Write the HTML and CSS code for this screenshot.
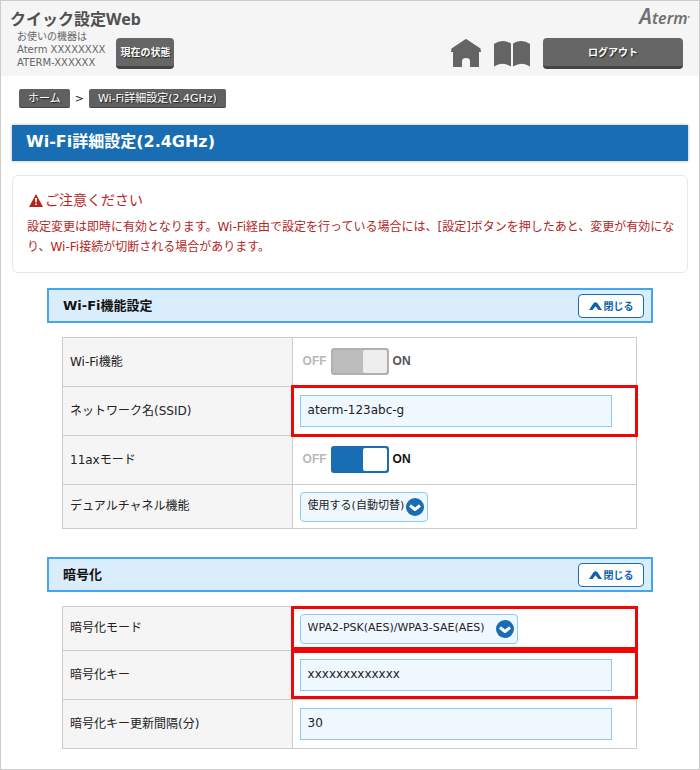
FILE: index.html
```html
<!DOCTYPE html>
<html lang="ja">
<head>
<meta charset="utf-8">
<meta name="viewport" content="width=device-width, initial-scale=1">
<title>クイック設定Web</title>
<link rel="stylesheet" href="styles.css">
</head>
<body>
<div class="page">
  <header class="header">
    <div class="brand">
      <h1 class="title">クイック設定Web</h1>
      <div class="device">
        <p class="device-name">お使いの機器は<br>Aterm XXXXXXXX<br>ATERM-XXXXXX</p>
        <button type="button" class="btn btn-status">現在の状態</button>
      </div>
    </div>
    <div class="tools">
      <div class="logo"><span class="logo-cap">A</span>term<span class="logo-mark">●</span></div>
      <div class="tool-row">
        <a href="#" aria-label="ホーム"><svg class="icon-home" viewBox="0 0 30 29"><path d="M14 .5Q15-.3 16 .5L29.500 9.500 30 13H28V28H19V22Q19 19 15 19T11 22V28H2V13H0L.5 9.500Z"/></svg></a>
        <a href="#" aria-label="マニュアル"><svg class="icon-book" viewBox="0 0 36 26"><path d="M0 3Q8-2.500 17 2.500V25.500Q8 20 0 25.500ZM19 2.500Q28-2.500 36 3V25.500Q28 20 19 25.500Z"/></svg></a>
        <button type="button" class="btn btn-logout">ログアウト</button>
      </div>
    </div>
  </header>

  <main class="main">
    <nav class="crumbs">
      <a href="#" class="crumb">ホーム</a>
      <span class="crumb-sep">&gt;</span>
      <a href="#" class="crumb">Wi-Fi詳細設定(2.4GHz)</a>
    </nav>

    <h2 class="page-title">Wi-Fi詳細設定(2.4GHz)</h2>

    <section class="notice">
      <h3 class="notice-title"><svg class="icon-warn" viewBox="0 0 14 13"><path class="warn-shape" d="M7 0 14 13H0Z"/><path class="warn-mark" d="M6 4h2l-.4 4.500H6.400ZM6.200 9.500h1.600V11H6.200Z"/></svg>ご注意ください</h3>
      <p class="notice-text">設定変更は即時に有効となります。Wi-Fi経由で設定を行っている場合には、[設定]ボタンを押したあと、変更が有効になり、Wi-Fi接続が切断される場合があります。</p>
    </section>

    <section class="group">
      <div class="group-head">
        <h3 class="group-title">Wi-Fi機能設定</h3>
        <button type="button" class="btn-close"><svg class="icon-up" viewBox="0 0 13 8"><path d="M0 8 4.500 1.200Q6.500-.8 8.500 1.200L13 8H9.500L6.500 4.200 3.500 8Z"/></svg>閉じる</button>
      </div>
      <table class="form">
        <tr>
          <th scope="row"><label for="wifi">Wi-Fi機能</label></th>
          <td><div class="switch is-disabled"><span class="off">OFF</span><input type="checkbox" id="wifi" class="toggle" checked disabled><span class="on">ON</span></div></td>
        </tr>
        <tr>
          <th scope="row"><label for="ssid">ネットワーク名(SSID)</label></th>
          <td class="marked"><input type="text" id="ssid" class="text" value="aterm-123abc-g"></td>
        </tr>
        <tr>
          <th scope="row"><label for="ax">11axモード</label></th>
          <td><div class="switch"><span class="off">OFF</span><input type="checkbox" id="ax" class="toggle" checked><span class="on">ON</span></div></td>
        </tr>
        <tr class="short">
          <th scope="row"><label for="dual">デュアルチャネル機能</label></th>
          <td><div class="select"><select id="dual"><option>使用する(自動切替)</option></select><svg class="icon-down" viewBox="0 0 18 18"><circle cx="9" cy="9" r="9"/><path d="M4 7.500 9 11.500 14 7.500"/></svg></div></td>
        </tr>
      </table>
    </section>

    <section class="group">
      <div class="group-head">
        <h3 class="group-title">暗号化</h3>
        <button type="button" class="btn-close"><svg class="icon-up" viewBox="0 0 13 8"><path d="M0 8 4.500 1.200Q6.500-.8 8.500 1.200L13 8H9.500L6.500 4.200 3.500 8Z"/></svg>閉じる</button>
      </div>
      <table class="form">
        <tr class="short">
          <th scope="row"><label for="mode">暗号化モード</label></th>
          <td class="marked marked-inner"><div class="select select-wide"><select id="mode"><option>WPA2-PSK(AES)/WPA3-SAE(AES)</option></select><svg class="icon-down" viewBox="0 0 18 18"><circle cx="9" cy="9" r="9"/><path d="M4 7.500 9 11.500 14 7.500"/></svg></div></td>
        </tr>
        <tr>
          <th scope="row"><label for="key">暗号化キー</label></th>
          <td class="marked marked-inner"><input type="text" id="key" class="text" value="xxxxxxxxxxxxx"></td>
        </tr>
        <tr>
          <th scope="row"><label for="interval">暗号化キー更新間隔(分)</label></th>
          <td><input type="text" id="interval" class="text" value="30"></td>
        </tr>
      </table>
    </section>
  </main>
</div>
</body>
</html>
```
FILE: styles.css
```css
* { box-sizing: border-box; }

body, h1, h2, h3, p { margin: 0; }

body {
  font-family: "DejaVu Sans", "Noto Sans CJK JP", sans-serif;
  font-size: 12px;
  color: #222;
  background: #fff;
}

button, input, select { font-family: inherit; color: inherit; }
svg { display: block; }

.page {
  min-height: 100vh;
  border: 1px solid #ccc;
}

.header {
  display: flex;
  justify-content: space-between;
  padding: 7px 16px 7px 9px;
  background: #f5f5f5;
}

.title {
  font-family: "Noto Sans", "Noto Sans CJK JP", sans-serif;
  font-size: 16px;
  line-height: 22px;
  font-weight: 700;
  color: #505050;
}

.device {
  display: flex;
  align-items: flex-end;
  gap: 11px;
  padding-left: 7px;
}

.device-name {
  font-size: 10px;
  line-height: 13px;
  color: #666;
}

.btn {
  height: 31px;
  padding: 0 4px 2px;
  border: 0;
  border-bottom: 3px solid #444;
  border-radius: 4px;
  background: #666;
  color: #fff;
  font-size: 10px;
  font-weight: 700;
  text-shadow: 1px 1px 1px #222;
  white-space: nowrap;
}

.btn-status { min-width: 58px; }
.btn-logout { width: 140px; }

.tools {
  display: flex;
  flex-direction: column;
  align-items: flex-end;
  justify-content: space-between;
}

.logo {
  display: flex;
  align-items: baseline;
  margin-right: -7px;
  font: italic 600 16px/16px "Noto Sans", sans-serif;
  color: #707070;
}

.logo-cap { font-size: 21px; }
.logo-mark { align-self: center; font-size: 4px; line-height: 4px; }

.tool-row {
  display: flex;
  align-items: center;
  gap: 13px;
}

.icon-home, .icon-book { fill: #646464; }
.icon-home { width: 30px; height: 29px; }
.icon-book { width: 36px; height: 26px; }

.main { padding: 13px 11px 19px; }

.crumbs {
  display: flex;
  align-items: center;
  gap: 5px;
  padding-left: 7px;
  margin-bottom: 17px;
}

.crumb {
  padding: 1px 9px 0;
  border-radius: 2px;
  border-bottom: 1px solid #444;
  background: #606060;
  color: #fff;
  font-size: 11px;
  line-height: 17px;
  text-decoration: none;
  text-shadow: 1px 1px 1px #222;
}

.crumb-sep { font-size: 11px; }

.page-title {
  padding: 0 14px 2px;
  background: #186db3;
  box-shadow: 0 0 3px #b8b0aa;
  color: #fff;
  font-size: 16px;
  line-height: 34px;
}

.notice {
  margin: 14px 0 15px;
  padding: 14px 12px 15px 14px;
  border: 1px solid #e8e8e8;
  border-radius: 6px;
  color: #b3261e;
}

.notice-title {
  display: flex;
  align-items: center;
  gap: 2px;
  margin-bottom: 7px;
  padding-left: 2px;
  font-size: 14px;
  line-height: 20px;
  font-weight: 400;
}

.icon-warn { width: 14px; height: 13px; }
.warn-shape { fill: #b3261e; }
.warn-mark { fill: #fff; }

.notice-text { line-height: 20px; }

.group { margin: 0 35px 28px; }
.group:last-child { margin-bottom: 0; }

.group-head {
  display: flex;
  align-items: center;
  justify-content: space-between;
  height: 35px;
  padding: 0 7px 0 14px;
  border: 2px solid #43a6f0;
  background: #daedfd;
}

.group-title { padding-bottom: 2px; font-size: 13px; color: #111; }

.btn-close {
  display: flex;
  align-items: center;
  justify-content: center;
  gap: 2px;
  width: 66px;
  height: 24px;
  padding: 0;
  border: 1px solid #186db3;
  border-radius: 4px;
  background: #fff;
  color: #0f62ac;
  font-size: 10px;
  font-weight: 700;
}

.icon-up { width: 13px; height: 8px; fill: #0f62ac; }

.form {
  width: calc(100% - 31px);
  margin: 14px 15px 0;
  border-collapse: collapse;
  table-layout: fixed;
}

.form th, .form td {
  height: 49px;
  padding: 0 7px;
  border: 1px solid #ccc;
}

.form .short th, .form .short td { height: 44px; }

.form th {
  width: 40%;
  padding-bottom: 4px;
  background: #f5f5f5;
  font-weight: 400;
  text-align: left;
}

.marked { position: relative; }

.marked::after {
  content: "";
  position: absolute;
  inset: -2px;
  border: 3px solid #f00606;
  pointer-events: none;
}

.marked-inner::after { inset: -1px -2px 0; }

.text {
  display: block;
  width: 312px;
  max-width: 100%;
  height: 32px;
  padding: 0 7px 2px;
  border: 1px solid #8cc8f8;
  background: #f0f8ff;
  font-size: 12px;
}

.switch {
  display: flex;
  align-items: center;
  gap: 4px;
  padding: 0 3px 2px;
  font: 700 12px/16px "Liberation Sans", sans-serif;
}

.off { color: #b8b8b8; }
.on { color: #111; }
.is-disabled .on { color: #555; }

.toggle {
  appearance: none;
  display: flex;
  justify-content: flex-end;
  width: 58px;
  height: 27px;
  margin: 0;
  border: 2px solid #186db3;
  border-radius: 3px;
  background: #186db3;
}

.toggle::before {
  content: "";
  width: 24px;
  border-radius: 2px;
  background: #fff;
}

.toggle:disabled { border-color: #b0b0b0; background: #bcbcbc; }
.toggle:disabled::before { background: #eee; }

.select {
  display: inline-grid;
  align-items: center;
  vertical-align: middle;
}

.select-wide { min-width: 218px; }

.select select {
  grid-area: 1 / 1;
  appearance: none;
  height: 30px;
  padding: 0 22px 2px 7px;
  border: 1px solid #8cc8f8;
  border-radius: 4px;
  background: #f0f8ff;
  font-size: 11px;
}

.icon-down {
  grid-area: 1 / 1;
  justify-self: end;
  width: 18px;
  height: 18px;
  margin-right: 4px;
  pointer-events: none;
}

.icon-down circle { fill: #186db3; }
.icon-down path { fill: none; stroke: #fff; stroke-width: 3; stroke-linejoin: round; }
```
